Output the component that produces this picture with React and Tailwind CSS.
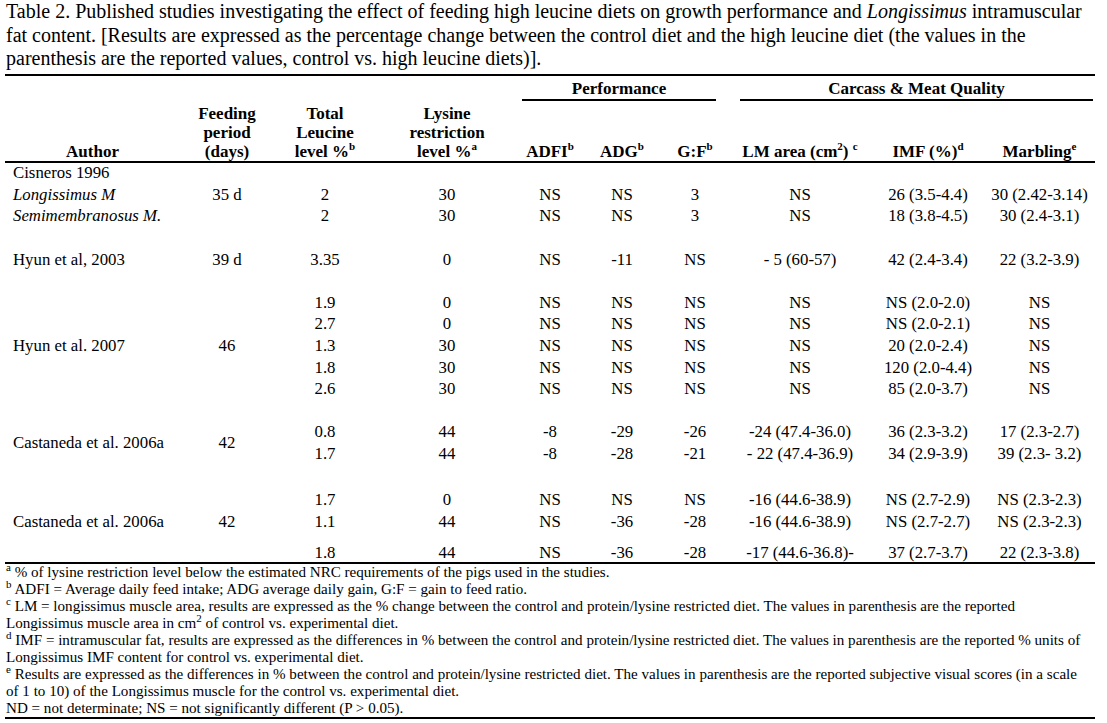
import React from "react";

const SERIF = { fontFamily: '"Liberation Serif", "Times New Roman", serif' };

function Sup({ children }) {
  return <sup className="text-[11px] top-[-0.55em]">{children}</sup>;
}

function Rule() {
  return <div className="h-[2px] w-[1090px] bg-black" />;
}

function Group({ author = "", italic = false, feed = "", rows, className = "", rowClass = "h-[21.6px]" }) {
  return (
    <div className={`flex ${className}`}>
      <div className={`w-[175px] shrink-0 flex items-center pl-[8px] whitespace-nowrap ${italic ? "italic" : ""}`}>
        {author}
      </div>
      <div className="w-[94px] shrink-0 flex items-center justify-center whitespace-nowrap">{feed}</div>
      <div className="flex flex-col">
        {rows.map((r, i) => (
          <div
            key={i}
            className={`grid grid-cols-[102px_142px_64px_80px_66px_144px_112px_111px] items-center ${rowClass}`}
          >
            {r.map((c, j) => (
              <div key={j} className="text-center whitespace-nowrap">
                {c}
              </div>
            ))}
          </div>
        ))}
      </div>
    </div>
  );
}

const blank = ["", "", "", "", "", "", "", ""];

export default function App() {
  return (
    <div className="w-[1107px] h-[723px] overflow-hidden bg-white text-black" style={SERIF}>
      <div className="pl-[5px]">
        <div className="pl-[1px] text-[20px] leading-[23.5px] whitespace-nowrap">
          Table 2. Published studies investigating the effect of feeding high leucine diets on growth performance and{" "}
          <i>Longissimus</i> intramuscular
          <br />
          fat content. [Results are expressed as the percentage change between the control diet and the high leucine diet (the values in the
          <br />
          parenthesis are the reported values, control vs. high leucine diets)].
        </div>

        <div className="mt-[3px]">
          <Rule />
        </div>

        {/* Header */}
        <div className="h-[85px] flex flex-col text-[17px] leading-[19px] font-bold">
          <div className="flex pt-[3px]">
            <div className="w-[513px] shrink-0" />
            <div className="w-[210px] shrink-0 flex flex-col">
              <div className="text-center pl-[4px] pr-[12px] whitespace-nowrap">Performance</div>
              <div className="ml-[4px] mr-[12px] mt-[1px] h-[2px] bg-black" />
            </div>
            <div className="w-[367px] shrink-0 flex flex-col">
              <div className="text-center pl-[12px] pr-[2px] whitespace-nowrap">Carcass &amp; Meat Quality</div>
              <div className="ml-[12px] mr-[2px] mt-[1px] h-[2px] bg-black" />
            </div>
          </div>
          <div className="flex-1 grid grid-cols-[175px_94px_102px_142px_64px_80px_66px_144px_112px_111px] items-end text-center">
            <div>Author</div>
            <div>
              Feeding
              <br />
              period
              <br />
              (days)
            </div>
            <div>
              Total
              <br />
              Leucine
              <br />
              level %<Sup>b</Sup>
            </div>
            <div>
              Lysine
              <br />
              restriction
              <br />
              level %<Sup>a</Sup>
            </div>
            <div className="whitespace-nowrap">
              ADFI<Sup>b</Sup>
            </div>
            <div className="whitespace-nowrap">
              ADG<Sup>b</Sup>
            </div>
            <div className="whitespace-nowrap">
              G:F<Sup>b</Sup>
            </div>
            <div className="whitespace-nowrap">
              LM area (cm<Sup>2</Sup>) <Sup>c</Sup>
            </div>
            <div className="whitespace-nowrap">
              IMF (%)<Sup>d</Sup>
            </div>
            <div className="whitespace-nowrap">
              Marbling<Sup>e</Sup>
            </div>
          </div>
        </div>

        <Rule />

        {/* Body */}
        <div className="text-[16.8px] leading-[20px]">
          <Group author="Cisneros 1996" rows={[blank]} />
          <Group
            author="Longissimus M"
            italic
            feed="35 d"
            rows={[["2", "30", "NS", "NS", "3", "NS", "26 (3.5-4.4)", "30 (2.42-3.14)"]]}
          />
          <Group
            author="Semimembranosus M."
            italic
            rows={[["2", "30", "NS", "NS", "3", "NS", "18 (3.8-4.5)", "30 (2.4-3.1)"]]}
          />
          <Group
            className="mt-[21.6px]"
            author="Hyun et al, 2003"
            feed="39 d"
            rows={[["3.35", "0", "NS", "-11", "NS", "- 5 (60-57)", "42 (2.4-3.4)", "22 (3.2-3.9)"]]}
          />
          <Group
            className="mt-[21.6px]"
            author="Hyun et al. 2007"
            feed="46"
            rows={[
              ["1.9", "0", "NS", "NS", "NS", "NS", "NS (2.0-2.0)", "NS"],
              ["2.7", "0", "NS", "NS", "NS", "NS", "NS (2.0-2.1)", "NS"],
              ["1.3", "30", "NS", "NS", "NS", "NS", "20 (2.0-2.4)", "NS"],
              ["1.8", "30", "NS", "NS", "NS", "NS", "120 (2.0-4.4)", "NS"],
              ["2.6", "30", "NS", "NS", "NS", "NS", "85 (2.0-3.7)", "NS"],
            ]}
          />
          <Group
            className="mt-[21.6px]"
            author="Castaneda et al. 2006a"
            feed="42"
            rows={[
              ["0.8", "44", "-8", "-29", "-26", "-24 (47.4-36.0)", "36 (2.3-3.2)", "17 (2.3-2.7)"],
              ["1.7", "44", "-8", "-28", "-21", "- 22 (47.4-36.9)", "34 (2.9-3.9)", "39 (2.3- 3.2)"],
            ]}
          />
          <Group
            className="mt-[24.6px]"
            rows={[["1.7", "0", "NS", "NS", "NS", "-16 (44.6-38.9)", "NS (2.7-2.9)", "NS (2.3-2.3)"]]}
          />
          <Group
            author="Castaneda et al. 2006a"
            feed="42"
            rows={[["1.1", "44", "NS", "-36", "-28", "-16 (44.6-38.9)", "NS (2.7-2.7)", "NS (2.3-2.3)"]]}
          />
          <Group
            className="mt-[10px]"
            rowClass="h-[19px]"
            rows={[["1.8", "44", "NS", "-36", "-28", "-17 (44.6-36.8)-", "37 (2.7-3.7)", "22 (2.3-3.8)"]]}
          />
        </div>

        <Rule />

        {/* Footnotes */}
        <div className="pl-[1px] text-[15.1px] leading-[17.1px] whitespace-nowrap">
          <div>
            <Sup>a</Sup> % of lysine restriction level below the estimated NRC requirements of the pigs used in the studies.
          </div>
          <div>
            <Sup>b</Sup> ADFI = Average daily feed intake; ADG average daily gain, G:F = gain to feed ratio.
          </div>
          <div>
            <Sup>c</Sup> LM = longissimus muscle area, results are expressed as the % change between the control and
            protein/lysine restricted diet. The values in parenthesis are the reported
          </div>
          <div>
            Longissimus muscle area in cm<Sup>2</Sup> of control vs. experimental diet.
          </div>
          <div>
            <Sup>d</Sup> IMF = intramuscular fat, results are expressed as the differences in % between the control and
            protein/lysine restricted diet. The values in parenthesis are the reported % units of
          </div>
          <div>Longissimus IMF content for control vs. experimental diet.</div>
          <div>
            <Sup>e</Sup> Results are expressed as the differences in % between the control and protein/lysine restricted
            diet. The values in parenthesis are the reported subjective visual scores (in a scale
          </div>
          <div>of 1 to 10) of the Longissimus muscle for the control vs. experimental diet.</div>
          <div>ND = not determinate; NS = not significantly different (P &gt; 0.05).</div>
        </div>

        <Rule />
      </div>
    </div>
  );
}
